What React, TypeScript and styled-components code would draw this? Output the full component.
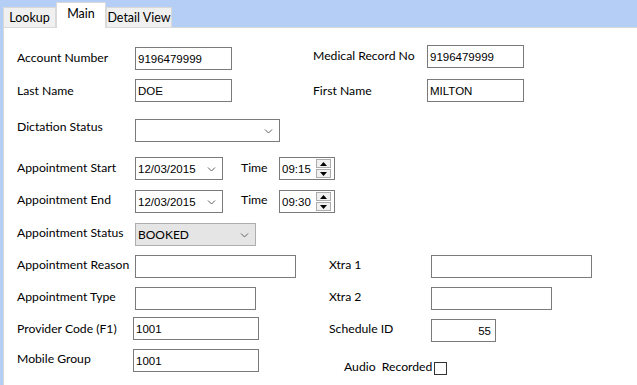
import React from "react";
import styled, { createGlobalStyle } from "styled-components";

const Global = createGlobalStyle`
  html, body { margin: 0; padding: 0; }
  body { background: #b5cef5; }
`;

const Page = styled.div`
  width: 637px;
  height: 385px;
  background: #b5cef5;
  display: flex;
  flex-direction: column;
  overflow: hidden;
  font-family: Lato, "Noto Sans", sans-serif;
  font-size: 12.2px;
  color: #000;
`;

const TabStrip = styled.div`
  display: flex;
  align-items: flex-end;
  height: 27px;
  padding-left: 3px;
  position: relative;
  z-index: 1;
`;

const Tab = styled.div<{ $active?: boolean; $w: number }>`
  box-sizing: border-box;
  width: ${(p) => p.$w}px;
  height: ${(p) => (p.$active ? 26 : 20)}px;
  margin-bottom: ${(p) => (p.$active ? -1 : 0)}px;
  background: ${(p) => (p.$active ? "#fff" : "#f0f0f0")};
  border: 1px solid #d9d9d9;
  border-bottom: none;
  display: flex;
  justify-content: center;
  align-items: ${(p) => (p.$active ? "flex-start" : "center")};
  padding-top: ${(p) => (p.$active ? 3 : 0)}px;
  line-height: 16px;
  font-size: 12.5px;
`;

const Panel = styled.div`
  flex: 1;
  margin-left: 3px;
  background: #fff;
  border-top: 1px solid #d9d9d9;
  border-left: 1px solid #d9d9d9;
  padding: 16px 0 0 13px;
  display: flex;
  flex-direction: column;
`;

const Row = styled.div<{ $h: number }>`
  display: flex;
  align-items: flex-start;
  height: ${(p) => p.$h}px;
  padding-top: 1px;
  box-sizing: border-box;
`;

const Label = styled.div<{ $w?: number; $dy: number; $ml?: number }>`
  width: ${(p) => (p.$w ? `${p.$w}px` : "auto")};
  margin-top: ${(p) => p.$dy}px;
  margin-left: ${(p) => p.$ml ?? 0}px;
  line-height: 16px;
  white-space: nowrap;
  flex-shrink: 0;
`;

const Box = styled.div<{ $w: number; $dy?: number; $grey?: boolean; $right?: boolean }>`
  box-sizing: border-box;
  width: ${(p) => p.$w}px;
  height: 23px;
  margin-top: ${(p) => p.$dy ?? 0}px;
  border: 1px solid ${(p) => (p.$grey ? "#adadad" : "#7a7a7a")};
  background: ${(p) => (p.$grey ? "#e5e5e5" : "#fff")};
  display: flex;
  align-items: center;
  justify-content: ${(p) => (p.$right ? "flex-end" : "flex-start")};
  padding: 0 ${(p) => (p.$right ? 4 : 2)}px 0 2px;
  font-family: "Liberation Sans", Arial, sans-serif;
  font-size: 11.5px;
  flex-shrink: 0;
`;

const Value = styled.span<{ $label?: boolean }>`
  flex: 1;
  white-space: nowrap;
  font-family: ${(p) => (p.$label ? 'Lato, "Noto Sans", sans-serif' : "inherit")};
  font-size: ${(p) => (p.$label ? 12 : 11.5)}px;
`;

const Chevron = styled.svg`
  width: 9px;
  height: 6px;
  margin-right: 4px;
`;

const Spinner = styled.div`
  display: flex;
  flex-direction: column;
  gap: 1px;
  margin-right: 1px;
`;

const SpinButton = styled.div`
  box-sizing: border-box;
  width: 15px;
  height: 9px;
  background: #f0f0f0;
  border: 1px solid #acacac;
  display: flex;
  align-items: center;
  justify-content: center;
`;

const Check = styled.div`
  box-sizing: border-box;
  width: 13px;
  height: 13px;
  margin-top: 13px;
  margin-left: 2px;
  border: 1px solid #333;
  background: #fff;
`;

const Down = () => (
  <Chevron viewBox="0 0 9 6">
    <path d="M1 1.5 L4.5 5 L8 1.5" fill="none" stroke="#606060" strokeWidth="1" />
  </Chevron>
);

const Combo = ({ w, value, grey }: { w: number; value?: string; grey?: boolean }) => (
  <Box $w={w} $grey={grey}>
    <Value $label={grey}>{value}</Value>
    <Down />
  </Box>
);

const TimeBox = ({ value }: { value: string }) => (
  <Box $w={56}>
    <Value>{value}</Value>
    <Spinner>
      <SpinButton>
        <svg width="7" height="4" viewBox="0 0 7 4">
          <path d="M0 4 L3.5 0 L7 4 Z" fill="#000" />
        </svg>
      </SpinButton>
      <SpinButton>
        <svg width="7" height="4" viewBox="0 0 7 4">
          <path d="M0 0 L3.5 4 L7 0 Z" fill="#000" />
        </svg>
      </SpinButton>
    </Spinner>
  </Box>
);

export default function App() {
  return (
    <Page>
      <Global />
      <TabStrip>
        <Tab $w={53}>Lookup</Tab>
        <Tab $w={50} $active>
          Main
        </Tab>
        <Tab $w={66}>Detail View</Tab>
      </TabStrip>
      <Panel>
        <Row $h={34}>
          <Label $w={118} $dy={5}>Account Number</Label>
          <Box $w={97} $dy={2}>9196479999</Box>
          <Label $w={114} $dy={3} $ml={81}>Medical Record No</Label>
          <Box $w={97}>9196479999</Box>
        </Row>
        <Row $h={40}>
          <Label $w={118} $dy={4}>Last Name</Label>
          <Box $w={97}>DOE</Box>
          <Label $w={114} $dy={4} $ml={81}>First Name</Label>
          <Box $w={97}>MILTON</Box>
        </Row>
        <Row $h={38}>
          <Label $w={118} $dy={0}>Dictation Status</Label>
          <Combo w={145} />
        </Row>
        <Row $h={33}>
          <Label $w={118} $dy={3}>Appointment Start</Label>
          <Combo w={88} value="12/03/2015" />
          <Label $w={38} $dy={3} $ml={18}>Time</Label>
          <TimeBox value="09:15" />
        </Row>
        <Row $h={33}>
          <Label $w={118} $dy={2}>Appointment End</Label>
          <Combo w={88} value="12/03/2015" />
          <Label $w={38} $dy={2} $ml={18}>Time</Label>
          <TimeBox value="09:30" />
        </Row>
        <Row $h={32}>
          <Label $w={118} $dy={2}>Appointment Status</Label>
          <Combo w={121} value="BOOKED" grey />
        </Row>
        <Row $h={32}>
          <Label $w={118} $dy={2}>Appointment Reason</Label>
          <Box $w={161} />
          <Label $w={102} $dy={2} $ml={33}>Xtra 1</Label>
          <Box $w={161} />
        </Row>
        <Row $h={30}>
          <Label $w={118} $dy={2}>Appointment Type</Label>
          <Box $w={121} />
          <Label $w={102} $dy={2} $ml={73}>Xtra 2</Label>
          <Box $w={121} />
        </Row>
        <Row $h={32}>
          <Label $w={116} $dy={4}>Provider Code (F1)</Label>
          <Box $w={126}>1001</Box>
          <Label $w={102} $dy={4} $ml={70}>Schedule ID</Label>
          <Box $w={65} $dy={2} $right>
            55
          </Box>
        </Row>
        <Row $h={37}>
          <Label $w={116} $dy={2}>Mobile Group</Label>
          <Box $w={126}>1001</Box>
          <Label $dy={10} $ml={85}>Audio&nbsp;&nbsp;Recorded</Label>
          <Check />
        </Row>
      </Panel>
    </Page>
  );
}
